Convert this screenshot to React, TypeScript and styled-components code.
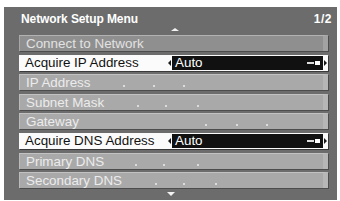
import styled, { createGlobalStyle } from 'styled-components';

const GlobalStyle = createGlobalStyle`
	html, body {
		margin: 0;
		padding: 0;
		background: #ffffff;
	}
	body {
		font-family: "Liberation Sans", Arial, sans-serif;
	}
`;

type Tone = 'dim' | 'field';

const Panel = styled.div`
	margin: 7px 0 0 4px;
	width: 333px;
	height: 193px;
	background: #6c6c6c;
	box-sizing: border-box;
	padding: 0 9px 0 15px;
	display: flex;
	flex-direction: column;
`;

const Header = styled.div`
	display: flex;
	justify-content: space-between;
	align-items: flex-start;
	padding: 5px 0 0 2px;
	height: 12px;
	color: #ffffff;
	font-size: 12px;
	font-weight: bold;
	line-height: 15px;
	letter-spacing: -0.1px;
`;

const Page = styled.span`
	margin-right: -4px;
	letter-spacing: 0.5px;
`;

const ArrowSlot = styled.div`
	display: flex;
	justify-content: center;
	align-items: center;
	height: 10px;
	padding-left: 2px;
`;

const Caret = styled.div<{ $down?: boolean }>`
	width: 0;
	height: 0;
	border-left: 4px solid transparent;
	border-right: 4px solid transparent;
	${(p) =>
		p.$down ? 'border-top: 4px solid #f2f2f2;' : 'border-bottom: 3px solid #f2f2f2;'}
`;

const List = styled.div`
	display: flex;
	flex-direction: column;
	gap: 3.6px;
	margin-top: 1px;
`;

const Row = styled.div<{ $tone: Tone }>`
	height: 16px;
	box-sizing: border-box;
	display: grid;
	align-items: center;
	padding-left: 6px;
	font-size: 13.4px;
	color: ${(p) => (p.$tone === 'dim' ? '#e2e2e2' : '#ececec')};
	background: ${(p) => (p.$tone === 'dim' ? '#8f8f8f' : '#a9a9a9')};
	border-top: 1px solid ${(p) => (p.$tone === 'dim' ? '#b2b2b2' : '#c2c2c2')};
	border-left: 1px solid ${(p) => (p.$tone === 'dim' ? '#a8a8a8' : '#bbbbbb')};
	border-right: 5px solid ${(p) => (p.$tone === 'dim' ? '#a2a2a2' : '#b6b6b6')};
	box-shadow: 1px 1px 0 #4c4c4c;
	white-space: nowrap;
`;

const Label = styled.span`
	grid-area: 1 / 1;
`;

const DotTrack = styled.div`
	grid-area: 1 / 1;
	display: flex;
	align-self: end;
	height: 5px;
	margin-left: -7px;
`;

const Dot = styled.span<{ $gap: number }>`
	margin-left: ${(p) => p.$gap}px;
	width: 2px;
	height: 2px;
	background: #dcdcdc;
`;

const SelectRow = styled.div`
	height: 16px;
	box-sizing: border-box;
	display: flex;
	align-items: center;
	background: #fbfbfb;
	padding: 1px 0 1px 6px;
	font-size: 13.4px;
	color: #111111;
	box-shadow: 1px 1px 0 #3a3a3a;
	white-space: nowrap;
`;

const SelectLabel = styled.span`
	width: 143px;
	flex-shrink: 0;
`;

const Arrow = styled.span<{ $right?: boolean }>`
	width: 0;
	height: 0;
	border-top: 3px solid transparent;
	border-bottom: 3px solid transparent;
	${(p) =>
		p.$right
			? 'border-left: 3px solid #1a1a1a; margin: 0 1px;'
			: 'border-right: 3px solid #1a1a1a; margin: 0 1px 0 0;'}
`;

const Value = styled.div`
	flex: 1;
	height: 100%;
	background: #111111;
	color: #ffffff;
	display: flex;
	align-items: center;
	justify-content: space-between;
	padding: 0 3px;
	box-sizing: border-box;
	font-size: 13.4px;
`;

const Meter = styled.div`
	display: flex;
	align-items: center;
	gap: 1px;
`;

const MeterBar = styled.span`
	width: 7px;
	height: 2px;
	background: #dddddd;
`;

const MeterBlock = styled.span`
	width: 5px;
	height: 4px;
	background: #ffffff;
`;

const Footer = styled.div`
	display: flex;
	justify-content: center;
	padding: 4px 6px 0 0;
`;

type Item =
	| { kind: 'plain'; label: string; tone: Tone; dots?: number[] }
	| { kind: 'select'; label: string; value: string };

// dot x positions are measured from the row's left edge
const items: Item[] = [
	{ kind: 'plain', label: 'Connect to Network', tone: 'dim' },
	{ kind: 'select', label: 'Acquire IP Address', value: 'Auto' },
	{ kind: 'plain', label: 'IP Address', tone: 'field', dots: [104, 134, 164] },
	{ kind: 'plain', label: 'Subnet Mask', tone: 'field', dots: [118, 146, 178] },
	{ kind: 'plain', label: 'Gateway', tone: 'field', dots: [186, 217, 247] },
	{ kind: 'select', label: 'Acquire DNS Address', value: 'Auto' },
	{ kind: 'plain', label: 'Primary DNS', tone: 'field', dots: [116, 144, 178] },
	{ kind: 'plain', label: 'Secondary DNS', tone: 'field', dots: [136, 164, 196] },
];

function MenuRow({ item }: { item: Item }) {
	if (item.kind === 'select') {
		return (
			<SelectRow>
				<SelectLabel>{item.label}</SelectLabel>
				<Arrow />
				<Value>
					<span>{item.value}</span>
					<Meter>
						<MeterBar />
						<MeterBlock />
					</Meter>
				</Value>
				<Arrow $right />
			</SelectRow>
		);
	}
	const dots = item.dots ?? [];
	return (
		<Row $tone={item.tone}>
			<Label>{item.label}</Label>
			{dots.length > 0 && (
				<DotTrack>
					{dots.map((d, i) => (
						<Dot key={i} $gap={i === 0 ? d : d - dots[i - 1] - 2} />
					))}
				</DotTrack>
			)}
		</Row>
	);
}

function App() {
	return (
		<>
			<GlobalStyle />
			<Panel>
				<Header>
					<span>Network Setup Menu</span>
					<Page>1/2</Page>
				</Header>
				<ArrowSlot>
					<Caret />
				</ArrowSlot>
				<List>
					{items.map((item) => (
						<MenuRow key={item.label} item={item} />
					))}
				</List>
				<Footer>
					<Caret $down />
				</Footer>
			</Panel>
		</>
	);
}

export default App;
